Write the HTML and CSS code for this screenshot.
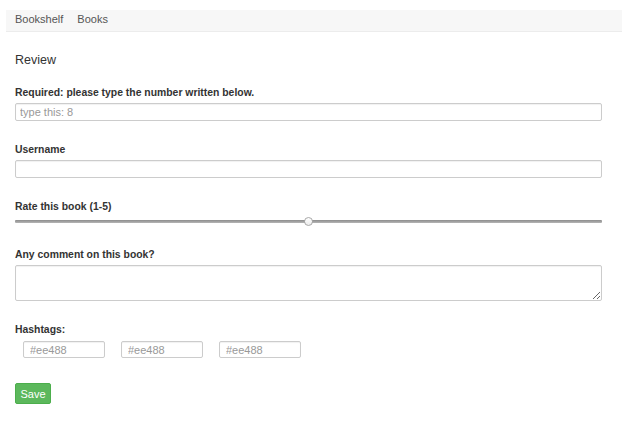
FILE: index.html
```html
<!DOCTYPE html>
<html>
<head>
<meta charset="utf-8">
<link rel="stylesheet" href="styles.css">
</head>
<body>
<div class="page">
  <nav class="navbar">
    <a class="nav-link">Bookshelf</a>
    <a class="nav-link">Books</a>
  </nav>
  <main class="content">
    <h2 class="title">Review</h2>
    <div class="group">
      <label class="label">Required: please type the number written below.</label>
      <input class="field" type="text" placeholder="type this: 8">
    </div>
    <div class="group">
      <label class="label">Username</label>
      <input class="field" type="text">
    </div>
    <div class="group">
      <label class="label">Rate this book (1-5)</label>
      <input class="slider" type="range" min="1" max="5" value="3">
    </div>
    <div class="group">
      <label class="label">Any comment on this book?</label>
      <textarea class="area"></textarea>
    </div>
    <div class="group">
      <label class="label">Hashtags:</label>
      <div class="tags">
        <input class="tag" type="text" placeholder="#ee488">
        <input class="tag" type="text" placeholder="#ee488">
        <input class="tag" type="text" placeholder="#ee488">
      </div>
    </div>
    <button class="save">Save</button>
  </main>
</div>
</body>
</html>
```
FILE: styles.css
```css
html, body {
  margin: 0;
  padding: 0;
  background: #fff;
}
body {
  font-family: "Liberation Sans", Arial, sans-serif;
  color: #333;
  font-size: 11px;
}
.page {
  padding: 10px 11px 0 6px;
}
.navbar {
  display: flex;
  align-items: flex-start;
  gap: 14px;
  height: 21px;
  box-sizing: content-box;
  padding-left: 9px;
  background: #f7f7f7;
  border-bottom: 1px solid #ececec;
}
.nav-link {
  color: #555;
  font-size: 11px;
  line-height: 13px;
  margin-top: 3px;
  text-decoration: none;
}
.content {
  padding: 0 20px 0 9px;
  display: flex;
  flex-direction: column;
  align-items: flex-start;
}
.title {
  margin: 20px 0 18px;
  font-size: 12.5px;
  line-height: 16px;
  font-weight: normal;
  color: #333;
}
.group {
  align-self: stretch;
  display: flex;
  flex-direction: column;
  margin-bottom: 22px;
}
.label {
  font-weight: bold;
  font-size: 10.4px;
  line-height: 14px;
  margin-bottom: 3px;
  color: #333;
}
.field, .tag, .area {
  box-sizing: border-box;
  height: 18px;
  border: 1px solid #ccc;
  border-radius: 2px;
  box-shadow: inset 0 1px 1px rgba(0,0,0,0.06);
  font-family: "Liberation Sans", Arial, sans-serif;
  font-size: 11px;
  padding: 0 4px;
  margin: 0;
  color: #555;
  outline: none;
}
.field::placeholder, .tag::placeholder {
  color: #999;
}
.area {
  height: 36px;
  resize: vertical;
}
.slider {
  -webkit-appearance: none;
  appearance: none;
  margin: 0;
  height: 9px;
  background: transparent;
  width: 100%;
}
.slider::-webkit-slider-runnable-track {
  height: 3px;
  background: linear-gradient(#8c8c8c, #b5b5b5);
  border-radius: 1px;
}
.slider::-webkit-slider-thumb {
  -webkit-appearance: none;
  appearance: none;
  width: 9px;
  height: 9px;
  margin-top: -3px;
  border-radius: 50%;
  background: linear-gradient(#fff, #ececec);
  border: 1px solid #a8a8a8;
  box-sizing: border-box;
}
.tags {
  display: flex;
  gap: 16px;
  padding-left: 8px;
  margin-top: 1px;
}
.tag {
  width: 82px;
  height: 17px;
  padding: 0 6px;
}
.save {
  margin-top: 3px;
  width: 36px;
  height: 21px;
  padding: 0;
  border: 1px solid #4cae4c;
  border-radius: 2px;
  background: #5cb85c;
  color: #fff;
  font-family: "Liberation Sans", Arial, sans-serif;
  font-size: 11px;
}
```
